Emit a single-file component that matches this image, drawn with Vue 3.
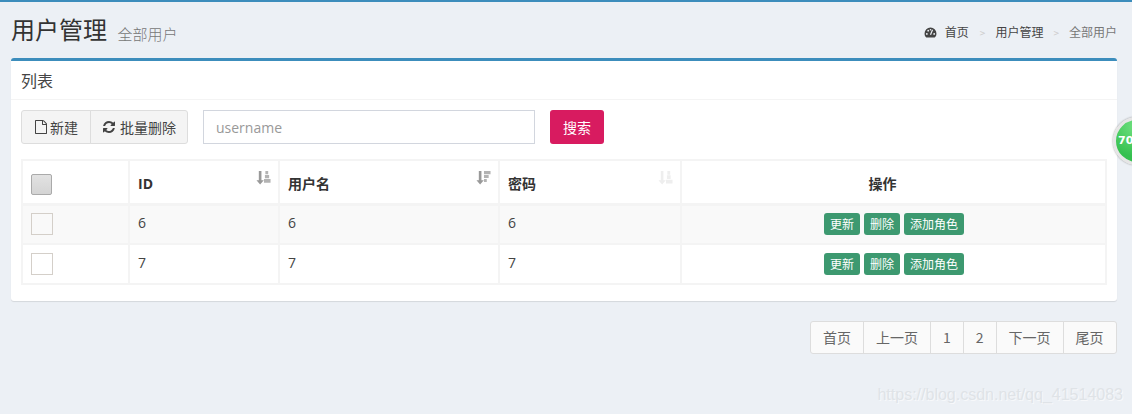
<template>
  <div class="page">
    <header class="page-head">
      <h1>用户管理 <small>全部用户</small></h1>
      <ol class="crumbs">
        <li>
          <svg class="gauge" viewBox="0 0 14 12"><path d="M7 0.5a6.5 6.5 0 0 0-6.5 6.5c0 1.7.6 3.2 1.6 4.3.2.2.4.2.6.2h8.600c.2 0 .4 0 .6-.2 1-1.100 1.600-2.600 1.600-4.300A6.500 6.500 0 0 0 7 .5z" fill="#444"/><path d="M7 8.500 9.200 3" stroke="#eef1f5" stroke-width="1.300" fill="none"/><circle cx="3" cy="7.500" r="1" fill="#eef1f5"/><circle cx="11" cy="7.500" r="1" fill="#eef1f5"/><circle cx="4.500" cy="4" r="1" fill="#eef1f5"/><circle cx="7" cy="3" r=".9" fill="#eef1f5"/></svg>
          <a>首页</a>
        </li>
        <li><a>用户管理</a></li>
        <li class="active">全部用户</li>
      </ol>
    </header>

    <section class="box">
      <div class="box-head">列表</div>
      <div class="box-body">
        <div class="toolbar">
          <div class="btn-group">
            <button class="btn">
              <svg class="ico" viewBox="0 0 1792 1792"><path d="M1596 380q28 28 48 76t20 88v1152q0 40-28 68t-68 28h-1344q-40 0-68-28t-28-68v-1600q0-40 28-68t68-28h896q40 0 88 20t76 48zm-444-244v376h376q-10-29-22-41l-313-313q-12-12-41-22zm384 1528v-1024h-416q-40 0-68-28t-28-68v-416h-768v1536h1280z"/></svg>
              新建
            </button>
            <button class="btn">
              <svg class="ico" viewBox="0 0 1792 1792"><path d="M1511 1056q0 5-1 7-64 268-268 434.500t-478 166.500q-146 0-282.500-55t-243.500-157l-129 129q-19 19-45 19t-45-19-19-45v-448q0-26 19-45t45-19h448q26 0 45 19t19 45-19 45l-137 137q71 66 161 102t187 36q134 0 250-65t186-179q11-17 53-117 8-23 30-23h192q13 0 22.500 9.500t9.500 22.500zm25-800v448q0 26-19 45t-45 19h-448q-26 0-45-19t-19-45 19-45l138-138q-148-137-349-137-134 0-250 65t-186 179q-11 17-53 117-8 23-30 23h-199q-13 0-22.500-9.500t-9.500-22.500v-7q65-268 270-434.500t480-166.500q146 0 284 55.500t245 156.500l130-129q19-19 45-19t45 19 19 45z"/></svg>
              批量删除
            </button>
          </div>
          <input class="search" placeholder="username" />
          <button class="search-btn">搜索</button>
        </div>

        <table class="grid">
          <thead>
            <tr>
              <th class="c-check"><span class="check-all"></span></th>
              <th class="c-id">ID
                <svg class="sort" viewBox="0 0 16 16"><path d="M3 1h2.800v10H8.300l-3.900 4.500L.5 11H3z"/><path d="M10 1h3v3.400h-3zM9.500 5.200h4.500v3.600H9.500zM8.500 9.600H15.500v3.900H8.500z" opacity=".75"/></svg>
              </th>
              <th class="c-name">用户名
                <svg class="sort" viewBox="0 0 16 16"><path d="M3 1h2.800v10H8.300l-3.900 4.500L.5 11H3z"/><path d="M8.500 1h7v3.400h-7zM8.500 5.200h5v3.400h-5zM8.500 9.500h3v3.400h-3z" opacity=".75"/></svg>
              </th>
              <th class="c-pass">密码
                <svg class="sort faint" viewBox="0 0 16 16"><path d="M3 1h2.800v10H8.300l-3.900 4.500L.5 11H3z"/><path d="M10 1h3v4h-3zM9.500 5.500h4v4h-4zM8.500 10.500h7v4h-7z"/></svg>
              </th>
              <th class="c-ops">操作</th>
            </tr>
          </thead>
          <tbody>
            <tr v-for="row in rows" :key="row.id">
              <td><span class="check"></span></td>
              <td>{{ row.id }}</td>
              <td>{{ row.name }}</td>
              <td>{{ row.pass }}</td>
              <td class="ops">
                <button class="tag">更新</button>
                <button class="tag">删除</button>
                <button class="tag">添加角色</button>
              </td>
            </tr>
          </tbody>
        </table>
      </div>
    </section>

    <nav class="pager">
      <a v-for="p in pages" :key="p">{{ p }}</a>
    </nav>

    <div class="ball"><span>70</span></div>
    <div class="mark">https://blog.csdn.net/qq_41514083</div>
  </div>
</template>

<script setup>
const rows = [
  { id: 6, name: "6", pass: "6" },
  { id: 7, name: "7", pass: "7" },
];
const pages = ["首页", "上一页", "1", "2", "下一页", "尾页"];
</script>

<style>
html, body { margin: 0; background: #ecf0f5; overflow: hidden; }
</style>

<style scoped>
.page {
  position: relative; box-sizing: border-box; height: 414px; overflow: hidden;
  background: #ecf0f5; border-top: 2px solid #3c8dbc;
  padding: 0 15px 0 11px;
  font-family: "Open Sans", "Noto Sans CJK SC", sans-serif;
  font-size: 14px; color: #333;
}
.page-head { display: flex; justify-content: space-between; height: 56px; }
h1 {
  margin: 12px 0 0; font-size: 24px; font-weight: 400; line-height: 30px;
  font-family: "Noto Sans CJK SC", sans-serif;
}
h1 small { font-size: 15px; color: #777; margin-left: 5px; font-weight: 300; vertical-align: -1px; }
.crumbs {
  list-style: none; display: flex; margin: 21px 0 0; padding: 0;
  font-size: 12px; line-height: 18px; height: 18px;
  font-family: "Noto Sans CJK SC", sans-serif;
  color: #444;
}
.crumbs li + li::before { content: ">"; color: #ccc; margin: 0 10px; font-size: 10px; }
.crumbs li:nth-child(2)::before { margin-left: 11px; }
.crumbs .active { color: #777; }
.gauge { width: 13px; height: 11px; margin-right: 8px; vertical-align: -1px; }

.box {
  box-sizing: border-box; height: 243px; background: #fff;
  border-top: 3px solid #3c8dbc; border-radius: 3px;
  box-shadow: 0 1px 1px rgba(0,0,0,.1);
}
.box-head {
  height: 38px; line-height: 38px; padding-left: 10px; font-size: 16px; color: #444;
  border-bottom: 1px solid #f4f4f4;
  font-family: "Noto Sans CJK SC", sans-serif;
}
.box-body { padding: 10px; }
.toolbar { display: flex; align-items: center; height: 34px; }
.btn-group { display: flex; }
.btn {
  box-sizing: border-box; height: 34px; padding: 0 12px; border: 1px solid #ddd;
  background: #f4f4f4; color: #444; font-size: 14px; line-height: 1;
  font-family: "Noto Sans CJK SC", sans-serif;
  display: flex; align-items: center; gap: 3px;
}
.btn:first-child { border-radius: 3px 0 0 3px; gap: 2px; }
.btn:last-child { border-radius: 0 3px 3px 0; margin-left: -1px; padding-right: 11px; }
.ico { width: 14px; height: 14px; fill: #444; }
.search {
  box-sizing: border-box; width: 332px; height: 34px; margin-left: 15px;
  border: 1px solid #d2d6de; padding: 0 12px; font-size: 14px; outline: 0;
  font-family: "Open Sans", sans-serif;
}
.search::placeholder { color: #999; }
.search-btn {
  width: 54px; height: 34px; margin-left: 15px; border: 0; border-radius: 3px;
  background: #d81b60; color: #fff; font-size: 14px;
  font-family: "Noto Sans CJK SC", sans-serif;
}

.grid {
  width: 1086px; margin-top: 15px; border-collapse: collapse; table-layout: fixed;
  font-family: "Open Sans", "Noto Sans CJK SC", sans-serif; line-height: 20px;
}
.grid th, .grid td { box-sizing: border-box; border: 2px solid #f4f4f4; padding: 0 8px; text-align: left; }
.grid thead th {
  height: 44px; position: relative; font-size: 14px; font-weight: 700; color: #333;
  border-bottom-width: 3px; padding-top: 5px;
}
.grid td { height: 40px; padding-bottom: 2px; color: #444; }
.grid tbody tr:nth-child(odd) { background: #f9f9f9; }
.c-check { width: 107px; }
.c-id { width: 150px; }
.c-name { width: 220px; }
.c-pass { width: 182px; }
.grid th.c-ops { text-align: center; padding-right: 30px; }
.check-all {
  display: block; box-sizing: border-box; width: 21px; height: 21px;
  border: 1px solid #aaa; border-radius: 2px;
  background: linear-gradient(#e2e2e2, #d4d4d4);
}
.check {
  display: block; box-sizing: border-box; width: 22px; height: 22px; margin-top: 2px;
  border: 1px solid #d4cfc9; background: #fff;
}
tbody tr:nth-child(odd) .check { background: #f9f9f9; }
.sort { position: absolute; top: 9px; right: 7px; width: 15px; height: 15px; fill: #999; }
.sort.faint { fill: #eee; }
.grid td.ops { text-align: center; font-size: 0; padding: 0 8px 0 9px; }
.tag {
  height: 22px; padding: 0 6px; margin-right: 4px; border: 0; border-radius: 3px;
  background: #3d9970; color: #fff; font-size: 12px; line-height: 22px; vertical-align: middle;
  font-family: "Noto Sans CJK SC", sans-serif;
}
.tag:last-child { margin-right: 0; }

.pager { display: flex; justify-content: flex-end; margin-top: 20px; }
.pager a {
  box-sizing: border-box; height: 33px; padding: 0 12.5px 0 11.5px; line-height: 31px;
  background: #fafafa; border: 1px solid #ddd; margin-left: -1px; color: #666;
  font-size: 14px;
  font-family: "Noto Sans CJK SC", sans-serif;
}
.pager a:first-child { border-radius: 3px 0 0 3px; }
.pager a:last-child { border-radius: 0 3px 3px 0; }

.ball {
  position: absolute; left: 1113px; top: 115px; width: 48px; height: 48px; box-sizing: border-box;
  border-radius: 50%; border: 3px solid #e6e6e6; box-shadow: 0 0 2px #888;
  background: radial-gradient(circle at 45% 15%, #6fe07f, #35c04f 70%);
  color: #fff; font: 700 11px/42px "DejaVu Sans", sans-serif;
}
.ball span { margin-left: 2px; }
.mark {
  position: absolute; right: 9px; top: 384px;
  font: 16px "Liberation Sans", sans-serif; color: #dfe3e7;
  text-shadow: 1px 1px 0 rgba(255,255,255,.6);
}
</style>
